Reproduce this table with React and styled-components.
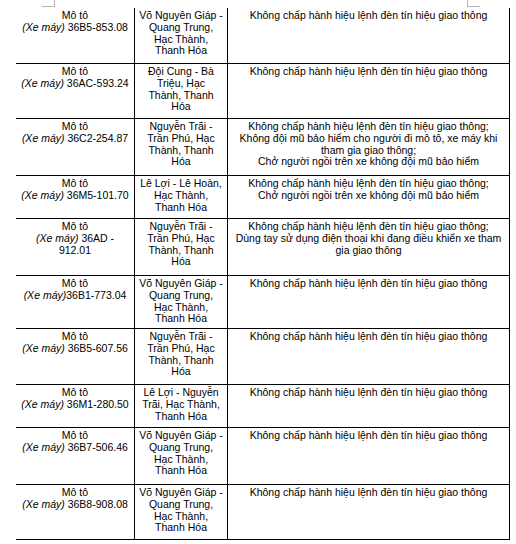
import React from "react";
import styled, { createGlobalStyle } from "styled-components";

const GlobalStyle = createGlobalStyle`
  html, body { margin: 0; padding: 0; background: #ffffff; }
  body { font-family: "Liberation Sans", Arial, sans-serif; color: #000; }
`;

const Page = styled.div`
  width: 516px;
  height: 544px;
  overflow: hidden;
  background: #fff;
`;

const PageTop = styled.div`
  height: 8px;
  display: flex;
  justify-content: space-between;
  align-items: flex-start;
  padding: 0 36px 0 42px;
`;

const CornerMark = styled.div`
  width: 12px;
  height: 6px;
  border-bottom: 1px solid #b4b4b4;
  border-${(p) => (p.$side === "left" ? "right" : "left")}: 1px solid #b4b4b4;
`;

const Table = styled.table`
  margin-left: 16px;
  border-collapse: separate;
  border-spacing: 0;
  table-layout: fixed;
  width: 494px;
`;

const Row = styled.tr`
  height: ${(p) => p.$h}px;
`;

const Cell = styled.td`
  box-sizing: border-box;
  width: ${(p) => p.$w}px;
  border-right: 1px solid #000;
  border-bottom: 1px solid #000;
  vertical-align: top;
  text-align: center;
  padding: 2px 2px 0;
  font-size: 10.5px;
  line-height: 11.75px;
  color: #000;
  white-space: nowrap;
`;

const Kind = styled.i`
  font-style: italic;
`;

const rows = [
  { h: 56, type: "(Xe máy) 36B5-853.08", place: ["Võ Nguyên Giáp -", "Quang Trung,", "Hạc Thành,", "Thanh Hóa"], v: ["Không chấp hành hiệu lệnh đèn tín hiệu giao thông"] },
  { h: 55, type: "(Xe máy) 36AC-593.24", place: ["Đội Cung - Bà", "Triệu, Hạc", "Thành, Thanh", "Hóa"], v: ["Không chấp hành hiệu lệnh đèn tín hiệu giao thông"] },
  { h: 57, type: "(Xe máy) 36C2-254.87", place: ["Nguyễn Trãi -", "Trần Phú, Hạc", "Thành, Thanh", "Hóa"], v: ["Không chấp hành hiệu lệnh đèn tín hiệu giao thông;", "Không đội mũ bảo hiểm cho người đi mô tô, xe máy khi", "tham gia giao thông;", "Chở người ngồi trên xe không đội mũ bảo hiểm"] },
  { h: 43, type: "(Xe máy) 36M5-101.70", place: ["Lê Lợi - Lê Hoàn,", "Hạc Thành,", "Thanh Hóa"], v: ["Không chấp hành hiệu lệnh đèn tín hiệu giao thông;", "Chở người ngồi trên xe không đội mũ bảo hiểm"] },
  { h: 57, type: "(Xe máy) 36AD -", extra: "912.01", place: ["Nguyễn Trãi -", "Trần Phú, Hạc", "Thành, Thanh", "Hóa"], v: ["Không chấp hành hiệu lệnh đèn tín hiệu giao thông;", "Dùng tay sử dụng điện thoại khi đang điều khiển xe tham", "gia giao thông"] },
  { h: 53, type: "(Xe máy)36B1-773.04", place: ["Võ Nguyên Giáp -", "Quang Trung,", "Hạc Thành,", "Thanh Hóa"], v: ["Không chấp hành hiệu lệnh đèn tín hiệu giao thông"] },
  { h: 56, type: "(Xe máy) 36B5-607.56", place: ["Nguyễn Trãi -", "Trần Phú, Hạc", "Thành, Thanh", "Hóa"], v: ["Không chấp hành hiệu lệnh đèn tín hiệu giao thông"] },
  { h: 43, type: "(Xe máy) 36M1-280.50", place: ["Lê Lợi - Nguyễn", "Trãi, Hạc Thành,", "Thanh Hóa"], v: ["Không chấp hành hiệu lệnh đèn tín hiệu giao thông"] },
  { h: 57, type: "(Xe máy) 36B7-506.46", place: ["Võ Nguyên Giáp -", "Quang Trung,", "Hạc Thành,", "Thanh Hóa"], v: ["Không chấp hành hiệu lệnh đèn tín hiệu giao thông"] },
  { h: 55, type: "(Xe máy) 36B8-908.08", place: ["Võ Nguyên Giáp -", "Quang Trung,", "Hạc Thành,", "Thanh Hóa"], v: ["Không chấp hành hiệu lệnh đèn tín hiệu giao thông"] },
];

function Lines({ items }) {
  return items.map((t, i) => (
    <React.Fragment key={i}>
      {i > 0 && <br />}
      {t}
    </React.Fragment>
  ));
}

function Vehicle({ text, extra }) {
  const m = text.match(/^\((Xe máy)\)\s?(.*)$/);
  const sep = text.startsWith("(Xe máy) ") ? " " : "";
  return (
    <>
      Mô tô
      <br />
      <Kind>(Xe máy)</Kind>
      {sep}
      {m[2]}
      {extra && (
        <>
          <br />
          {extra}
        </>
      )}
    </>
  );
}

export default function App() {
  return (
    <Page>
      <GlobalStyle />
      <PageTop>
        <CornerMark $side="left" />
        <CornerMark $side="right" />
      </PageTop>
      <Table>
        <tbody>
          {rows.map((r, i) => (
            <Row key={i} $h={r.h}>
              <Cell $w={119}>
                <Vehicle text={r.type} extra={r.extra} />
              </Cell>
              <Cell $w={93}>
                <Lines items={r.place} />
              </Cell>
              <Cell $w={282}>
                <Lines items={r.v} />
              </Cell>
            </Row>
          ))}
        </tbody>
      </Table>
    </Page>
  );
}
